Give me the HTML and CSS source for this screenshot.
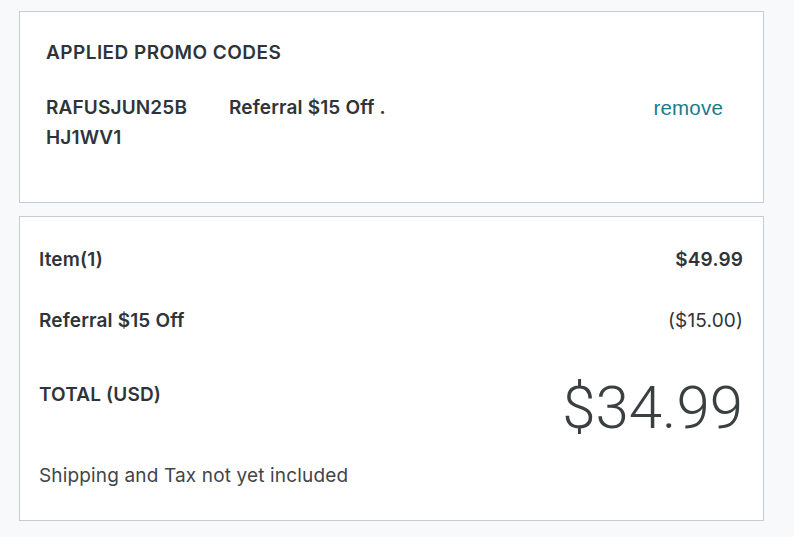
FILE: index.html
```html
<!DOCTYPE html>
<html>
<head>
<meta charset="utf-8">
<link rel="stylesheet" href="styles.css">
</head>
<body>
<div class="page">
  <section class="card promo">
    <h2 class="promo-title">APPLIED PROMO CODES</h2>
    <div class="promo-row">
      <div class="promo-code"><span>RAFUSJUN25B</span><span>HJ1WV1</span></div>
      <div class="promo-desc">Referral $15 Off .</div>
      <a class="promo-remove" href="#">remove</a>
    </div>
  </section>
  <section class="card summary">
    <div class="line">
      <span class="label">Item(1)</span>
      <span class="amount strong">$49.99</span>
    </div>
    <div class="line">
      <span class="label">Referral $15 Off</span>
      <span class="amount">($15.00)</span>
    </div>
    <div class="line total">
      <span class="label">TOTAL (USD)</span>
      <span class="total-amount">$34.99</span>
    </div>
    <p class="note">Shipping and Tax not yet included</p>
  </section>
</div>
</body>
</html>
```
FILE: styles.css
```css
html, body {
  margin: 0;
  padding: 0;
  background: #f7f9fa;
}
body {
  font-family: Inter, "Liberation Sans", sans-serif;
  color: #2f3438;
  letter-spacing: 0.15px;
}
.page {
  padding: 11px 30px 0 19px;
  display: flex;
  flex-direction: column;
  gap: 13px;
}
.card {
  background: #ffffff;
  border: 1px solid #c3cfd5;
  box-sizing: border-box;
}
.promo {
  height: 192px;
  padding: 29px 40px 0 26px;
}
.promo-title {
  margin: 0;
  font-size: 19px;
  font-weight: 600;
  line-height: 24px;
  letter-spacing: 0.45px;
}
.promo-row {
  display: flex;
  margin-top: 28px;
  font-size: 19px;
  font-weight: 600;
  line-height: 30px;
}
.promo-code {
  width: 183px;
  display: flex;
  flex-direction: column;
}
.promo-desc {
  flex: 1;
}
.promo-remove {
  font-family: "Liberation Sans", Arial, sans-serif;
  font-weight: 400;
  font-size: 20.5px;
  letter-spacing: 0.2px;
  color: #1d7a8a;
  text-decoration: none;
}
.summary {
  height: 305px;
  padding: 31px 20px 0 19px;
}
.line {
  display: flex;
  justify-content: space-between;
  align-items: center;
  font-size: 19px;
  line-height: 24px;
}
.line + .line {
  margin-top: 37px;
}
.label {
  font-weight: 600;
}
.amount {
  font-weight: 400;
}
.amount.strong {
  font-weight: 600;
}
.line.total {
  align-items: flex-start;
  margin-top: 50px;
}
.total-amount {
  font-family: Roboto, Inter, sans-serif;
  font-size: 60px;
  font-weight: 300;
  line-height: 60px;
  letter-spacing: 0;
  margin-top: -5px;
  color: #3a3f42;
}
.note {
  margin: 26px 0 0;
  font-size: 19px;
  line-height: 24px;
  color: #3f454a;
}
```
